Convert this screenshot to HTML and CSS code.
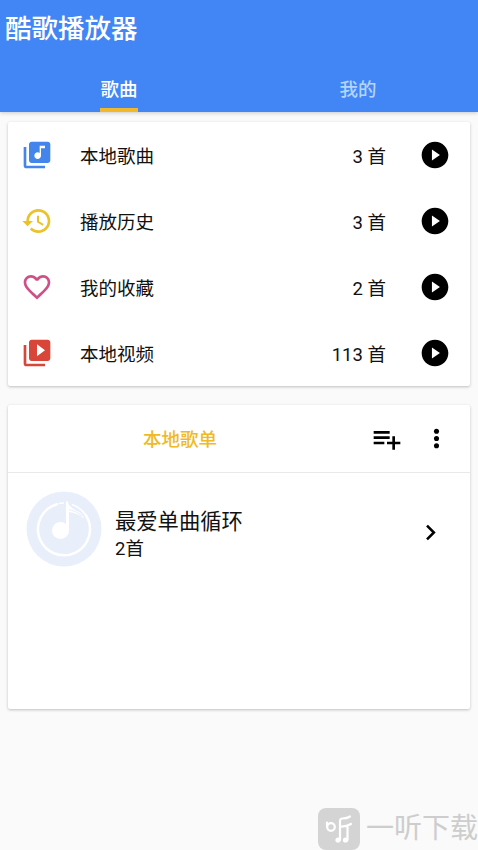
FILE: index.html
```html
<!DOCTYPE html>
<html lang="zh-CN">
<head>
<meta charset="utf-8">
<title>酷歌播放器</title>
<link rel="stylesheet" href="styles.css">
</head>
<body>
<svg class="defs" width="0" height="0">
  <symbol id="play" viewBox="0 0 24 24"><path fill-rule="evenodd" d="M12 2C6.48 2 2 6.48 2 12s4.480 10 10 10 10-4.480 10-10S17.520 2 12 2zm-2.300 14.200V7.800l6 4.200z"/></symbol>
</svg>
<header class="app-bar">
  <h1 class="title">酷歌播放器</h1>
  <nav class="tabs">
    <div class="tab active"><span>歌曲</span></div>
    <div class="tab"><span>我的</span></div>
  </nav>
</header>
<main class="content">
  <section class="card library">
    <div class="row">
      <svg class="icon blue" viewBox="0 0 24 24"><path d="M20 2H8c-1.100 0-2 .9-2 2v12c0 1.100.9 2 2 2h12c1.100 0 2-.9 2-2V4c0-1.100-.9-2-2-2zm-2 5h-3v5.500c0 1.380-1.120 2.500-2.500 2.500S10 13.880 10 12.500s1.120-2.500 2.500-2.500c.57 0 1.080.19 1.500.51V5h4v2zM4 6H2v14c0 1.100.9 2 2 2h14v-2H4V6z"/></svg>
      <span class="label">本地歌曲</span><span class="count">3 首</span>
      <svg class="icon"><use href="#play"/></svg>
    </div>
    <div class="row">
      <svg class="icon yellow" viewBox="0 0 24 24"><path d="M13 3c-4.970 0-9 4.030-9 9H1l3.890 3.890.07.14L9 12H6c0-3.870 3.130-7 7-7s7 3.130 7 7-3.130 7-7 7c-1.930 0-3.680-.79-4.940-2.060l-1.420 1.420C8.270 19.990 10.510 21 13 21c4.970 0 9-4.030 9-9s-4.030-9-9-9zm-1 5v5l4.280 2.540.72-1.210-3.500-2.080V8H12z"/></svg>
      <span class="label">播放历史</span><span class="count">3 首</span>
      <svg class="icon"><use href="#play"/></svg>
    </div>
    <div class="row">
      <svg class="icon pink" viewBox="0 0 24 24"><path d="M16.500 3c-1.740 0-3.410.81-4.500 2.090C10.910 3.810 9.240 3 7.500 3 4.420 3 2 5.420 2 8.500c0 3.780 3.400 6.860 8.550 11.540L12 21.350l1.450-1.320C18.600 15.360 22 12.280 22 8.500 22 5.420 19.580 3 16.500 3zm-4.400 15.550l-.1.100-.1-.1C7.140 14.240 4 11.390 4 8.500 4 6.500 5.500 5 7.500 5c1.540 0 3.040.99 3.570 2.360h1.870C13.460 5.990 14.960 5 16.500 5c2 0 3.500 1.500 3.500 3.500 0 2.890-3.140 5.740-7.900 10.050z"/></svg>
      <span class="label">我的收藏</span><span class="count">2 首</span>
      <svg class="icon"><use href="#play"/></svg>
    </div>
    <div class="row">
      <svg class="icon red" viewBox="0 0 24 24"><path d="M4 6H2v14c0 1.100.9 2 2 2h14v-2H4V6zm16-4H8c-1.100 0-2 .9-2 2v12c0 1.100.9 2 2 2h12c1.100 0 2-.9 2-2V4c0-1.100-.9-2-2-2zm-8 12.500v-9l6 4.500-6 4.500z"/></svg>
      <span class="label">本地视频</span><span class="count">113 首</span>
      <svg class="icon"><use href="#play"/></svg>
    </div>
  </section>
  <section class="card playlists">
    <div class="list-head">
      <h2 class="list-title">本地歌单</h2>
      <svg class="icon add" viewBox="0 0 24 24"><path d="M14 10H2v2h12v-2zm0-4H2v2h12V6zm4 8v-4h-2v4h-4v2h4v4h2v-4h4v-2h-4zM2 16h8v-2H2v2z"/></svg>
      <svg class="more" viewBox="0 0 24 24"><circle cx="12" cy="6" r="2.100"/><circle cx="12" cy="12" r="2.100"/><circle cx="12" cy="18" r="2.100"/></svg>
    </div>
    <div class="playlist">
      <svg class="cover" viewBox="0 0 76 76">
        <circle cx="38" cy="38" r="37.500" fill="#e9eefb"/>
        <path d="M31 13.200A26 26 0 1 0 60 24.500" fill="none" stroke="#fff" stroke-width="2.500" stroke-linecap="round"/>
        <path d="M33 12.500q2-.6 5-.5M46 13.500q9 3 14 11" fill="none" stroke="#fff" stroke-width="1.500"/>
        <circle cx="34.500" cy="39.500" r="8.500" fill="#fff"/>
        <path d="M40 10.500h2c.5 5 6 8 10 10 4 2 5 4 6 7-5-4-10-6-15-6.500V40h-3z" fill="#fff"/>
        <path d="M43 18.500c5 1 9 3 13 6.500" fill="none" stroke="#e9eefb" stroke-width="1.200"/>
      </svg>
      <div class="info"><div class="name">最爱单曲循环</div><div class="sub">2首</div></div>
      <svg class="chevron" viewBox="0 0 24 24"><path d="M10 6L8.590 7.410 13.170 12l-4.580 4.590L10 18l6-6z"/></svg>
    </div>
  </section>
</main>
<div class="watermark">
  <svg class="mark" viewBox="0 0 42 42"><rect width="42" height="42" rx="8" fill="#d4d4d4"/><g fill="none" stroke="#fff" stroke-width="2.200" stroke-linecap="round"><circle cx="13" cy="19" r="3.800"/><path d="M9 14.500v4M22 32V13q0-2.500 2.500-2.500 4.500 0 7.500-2M22 18.500q6 .5 11-2.500M29.500 18v14"/></g><circle cx="20" cy="32" r="2.600" fill="#fff"/><circle cx="27.500" cy="32" r="2.600" fill="#fff"/></svg>
  <span>一听下载</span>
</div>
</body>
</html>
```
FILE: styles.css
```css
* { box-sizing: border-box; }
body {
  margin: 0;
  height: 850px;
  overflow: hidden;
  background: #fafafa;
  color: #111;
  font-family: Roboto, "Noto Sans CJK SC", sans-serif;
  font-size: 18.5px;
}
h1, h2 { margin: 0; font-weight: 400; }
svg { display: block; flex: none; }
.defs { position: absolute; }
.app-bar {
  height: 112px;
  background: #4286f5;
  color: #fff;
  box-shadow: 0 1px 4px rgba(0, 0, 0, .2);
  display: flex;
  flex-direction: column;
}
.title {
  flex: none;
  height: 66px;
  padding-left: 5px;
  font-size: 26.5px;
  font-weight: 500;
  line-height: 57px;
}
.tabs { display: flex; height: 46px; }
.tab {
  flex: 1;
  display: flex;
  justify-content: center;
  font-weight: 500;
  color: #b4d5fb;
  line-height: 48px;
}
.tab.active { color: #fff; }
.tab.active span { border-bottom: 4px solid #f0b92d; height: 46px; }
.tab span { margin-right: 1px; }
.content {
  padding: 10px 8px 0;
  display: flex;
  flex-direction: column;
  gap: 19px;
}
.card {
  background: #fff;
  border-radius: 2px;
  width: 462px;
  box-shadow: 0 1px 3px rgba(0, 0, 0, .24);
}
.row {
  height: 66px;
  display: flex;
  align-items: center;
  padding: 0 19.5px 0 13px;
}
.icon { width: 32px; height: 32px; }
.blue { fill: #4385ec; }
.yellow { fill: #ecc229; }
.pink { fill: #cf4f86; }
.red { fill: #d84639; }
.label { margin-left: 27px; flex: 1; }
.count { margin-right: 32.5px; }
.label, .count { padding-bottom: 1px; }
.playlists { height: 304px; }
.list-head {
  height: 68px;
  border-bottom: 1px solid #e9e9e9;
  display: flex;
  align-items: center;
  padding-right: 19px;
}
.list-title {
  flex: 1;
  padding: 0 0 1px 135px;
  font-size: 18.5px;
  font-weight: 500;
  color: #efba23;
}
.more { width: 29px; height: 29px; margin-left: 19px; }
.playlist {
  height: 115px;
  display: flex;
  align-items: center;
  padding: 0 24px 0 18px;
}
.cover { width: 76px; height: 76px; margin-top: -3px; }
.info { flex: 1; margin-left: 13px; padding-top: 8px; }
.name { font-size: 21.3px; line-height: 28px; }
.sub { line-height: 26px; }
.chevron { width: 31px; height: 31px; margin-top: 4px; }
.watermark {
  position: absolute;
  left: 318px;
  top: 808px;
  display: flex;
  align-items: center;
  gap: 6px;
  color: #cdcdcd;
  font-size: 28px;
  line-height: 42px;
  white-space: nowrap;
}
.mark { width: 42px; height: 42px; }
```
